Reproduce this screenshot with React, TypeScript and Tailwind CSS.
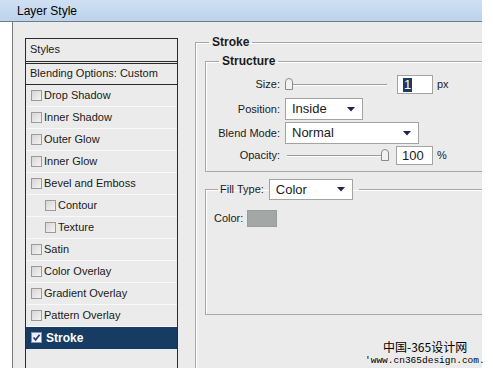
const font = { fontFamily: '"Liberation Sans", Arial, sans-serif' };

interface StyleItem {
  label: string;
  indent?: boolean;
  selected?: boolean;
}

const styleItems: StyleItem[] = [
  { label: "Drop Shadow" },
  { label: "Inner Shadow" },
  { label: "Outer Glow" },
  { label: "Inner Glow" },
  { label: "Bevel and Emboss" },
  { label: "Contour", indent: true },
  { label: "Texture", indent: true },
  { label: "Satin" },
  { label: "Color Overlay" },
  { label: "Gradient Overlay" },
  { label: "Pattern Overlay" },
  { label: "Stroke", selected: true },
];

function Checkbox({ checked }: { checked?: boolean }) {
  if (checked) {
    return (
      <span className="w-[11px] h-[11px] shrink-0 border border-[#8b8fa8] bg-gradient-to-br from-[#e4e6f2] to-[#ffffff] flex items-center justify-center">
        <svg width="9" height="9" viewBox="0 0 9 9">
          <path d="M1.5 4.5 L3.6 6.8 L7.6 1.8" stroke="#2a3a8a" strokeWidth="1.8" fill="none" />
        </svg>
      </span>
    );
  }
  return (
    <span className="w-[11px] h-[11px] shrink-0 border border-[#9a9a9a] bg-gradient-to-br from-[#d6d6d6] to-[#f4f4f4]" />
  );
}

function Arrow() {
  return (
    <svg width="8" height="5" viewBox="0 0 8 5" className="shrink-0">
      <path d="M0 0 H8 L4 4.5 Z" fill="#1c2456" />
    </svg>
  );
}

function Select({ value, width, height = 22 }: { value: string; width: string; height?: number }) {
  return (
    <div
      className={`${width} bg-white border border-[#a3a3a3] flex items-center justify-between pl-[6px] pr-[7px] text-[13px] text-[#1a1a1a]`}
      style={{ height }}
    >
      <span>{value}</span>
      <Arrow />
    </div>
  );
}

function Slider({ thumbRight }: { thumbRight?: boolean }) {
  return (
    <div className="relative w-[103px] h-[19px] shrink-0">
      <div className="absolute left-[2px] right-[1px] top-[9px] h-[2px] border-t border-[#9c9c9c] border-b border-b-white" />
      <svg
        width="8"
        height="12"
        viewBox="0 0 8 12"
        className={`absolute top-[3px] ${thumbRight ? "left-[96px]" : "left-[0px]"}`}
      >
        <path d="M0.5 4 Q0.5 0.5 4 0.5 Q7.5 0.5 7.5 4 V11.5 H0.5 Z" fill="#f2f2f2" stroke="#8a8a8a" />
      </svg>
    </div>
  );
}

function Label({ text }: { text: string }) {
  return <span className="w-[74px] shrink-0 text-right mr-[5px]">{text}</span>;
}

export default function App() {
  return (
    <div className="w-[493px] h-[374px] bg-white overflow-hidden relative text-[11px] text-[#1a1a1a]" style={font}>
      <div className="w-[482px] h-[22px] bg-gradient-to-b from-[#cfe0f3] to-[#bcd3ec] border-b border-[#6d7d90] flex items-center pl-[17px] text-[12px] text-black">
        Layer Style
      </div>
      <div className="w-[470px] h-[346px] ml-[12px] bg-[#ebebeb] border-l border-[#7c7c7c] flex overflow-hidden">
        <div className="pl-[12px] pt-[16px] shrink-0">
          <div className="w-[153px] h-[340px] border border-[#2a2a2a] flex flex-col">
            <div className="h-[22px] flex items-center pl-[4px] pb-[2px]">Styles</div>
            <div className="border-b-[3px] border-double border-[#2a2a2a]" />
            <div className="h-[21px] flex items-center pl-[4px] pb-[2px] border-b border-[#2a2a2a]">
              Blending Options: Custom
            </div>
            {styleItems.map((item) => (
              <div
                key={item.label}
                className={`h-[22px] shrink-0 flex items-center gap-[2px] border-b ${
                  item.selected
                    ? "bg-[#173c64] border-[#173c64] text-white font-bold text-[12px]"
                    : "border-[#f8f8f8]"
                } ${item.indent ? "pl-[19px]" : "pl-[5px]"}`}
              >
                <Checkbox checked={item.selected} />
                <span className={item.selected ? "ml-[2px]" : ""}>{item.label}</span>
              </div>
            ))}
          </div>
        </div>

        <div className="ml-[17px] pt-[14px] shrink-0">
          <fieldset className="w-[300px] h-[400px] border border-[#a8a8a8] shadow-[inset_1px_1px_0_#fff]">
            <legend className="ml-[13px] px-[3px] font-bold text-[12px] leading-[13px]">Stroke</legend>
            <fieldset className="ml-[9px] mt-[6px] w-[290px] border border-[#a8a8a8] shadow-[inset_1px_1px_0_#fff] pb-[6px]">
              <legend className="ml-[13px] px-[3px] font-bold text-[12px] leading-[13px]">Structure</legend>
              <div className="mt-[7px] h-[19px] flex items-center">
                <Label text="Size:" />
                <Slider />
                <div className="ml-[9px] w-[36px] h-[19px] bg-white border border-[#a3a3a3] flex items-center pl-[5px]">
                  <span className="bg-[#1b3a63] text-white text-[13px] leading-[14px] px-[1px]">1</span>
                </div>
                <span className="ml-[4px]">px</span>
              </div>
              <div className="mt-[4px] flex items-center">
                <Label text="Position:" />
                <Select value="Inside" width="w-[78px]" />
              </div>
              <div className="mt-[2px] flex items-center">
                <Label text="Blend Mode:" />
                <Select value="Normal" width="w-[134px]" />
              </div>
              <div className="mt-[2px] h-[19px] flex items-center">
                <Label text="Opacity:" />
                <Slider thumbRight />
                <div className="ml-[8px] w-[37px] h-[19px] bg-white border border-[#a3a3a3] flex items-center pl-[5px] text-[13px]">
                  100
                </div>
                <span className="ml-[4px]">%</span>
              </div>
            </fieldset>
            <fieldset className="ml-[9px] mt-[7px] w-[290px] border border-[#a8a8a8] shadow-[inset_1px_1px_0_#fff] pb-[87px]">
              <legend className="ml-[12px] pl-[2px] pr-[6px]">
                <div className="flex items-center gap-[5px]">
                  <span>Fill Type:</span>
                  <Select value="Color" width="w-[84px]" height={21} />
                </div>
              </legend>
              <div className="mt-[10px] pl-[8px] flex items-center gap-[4px]">
                <span>Color:</span>
                <div className="w-[30px] h-[17px] bg-[#a3a7a5] border border-[#989c9a]" />
              </div>
            </fieldset>
          </fieldset>
        </div>
      </div>

      <div
        className="absolute left-[383px] top-[340px] text-[12px] leading-[14px] text-black whitespace-nowrap"
        style={{ fontFamily: '"Noto Sans CJK SC", sans-serif' }}
      >
        中国-365设计网
      </div>
      <div
        className="absolute left-[365px] top-[355px] text-[9.5px] leading-[12px] text-black whitespace-nowrap"
        style={{ fontFamily: '"Liberation Mono", monospace' }}
      >
        'www.cn365design.com.
      </div>
    </div>
  );
}
